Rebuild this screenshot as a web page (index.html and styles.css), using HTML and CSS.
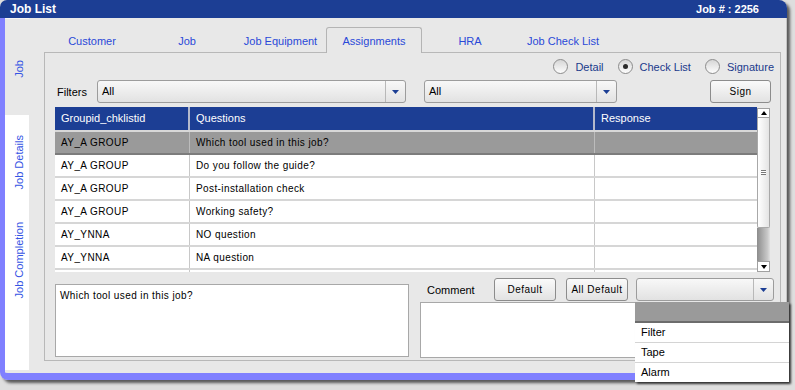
FILE: index.html
```html
<!DOCTYPE html>
<html>
<head>
<meta charset="utf-8">
<title>Job List</title>
<link rel="stylesheet" href="styles.css">
</head>
<body>
<div class="window">
  <div class="titlebar">
    <span class="title">Job List</span>
    <span class="jobno">Job # : 2256</span>
  </div>
  <div class="main">
    <div class="side">
      <div class="vtab vtab-active"><span class="vlabel">Job</span></div>
      <div class="vstrip">
        <div class="vtab vtab-details"><span class="vlabel">Job Details</span></div>
        <div class="vtab vtab-completion"><span class="vlabel">Job Completion</span></div>
      </div>
    </div>
    <div class="content">
      <div class="tabs">
        <div class="tab">Customer</div>
        <div class="tab">Job</div>
        <div class="tab">Job Equipment</div>
        <div class="tab tab-active">Assignments</div>
        <div class="tab">HRA</div>
        <div class="tab">Job Check List</div>
      </div>
      <div class="panel">
        <div class="radios">
          <label class="radio"><span class="radio-dot"></span>Detail</label>
          <label class="radio"><span class="radio-dot radio-checked"></span>Check List</label>
          <label class="radio"><span class="radio-dot"></span>Signature</label>
        </div>
        <div class="filters">
          <span class="filters-label">Filters</span>
          <div class="select select-wide">
            <span class="select-value">All</span>
            <span class="select-btn"><svg width="7" height="4" viewBox="0 0 7 4"><path d="M0 0H7L3.5 4Z" fill="#1c3e94"/></svg></span>
          </div>
          <div class="select select-mid">
            <span class="select-value">All</span>
            <span class="select-btn"><svg width="7" height="4" viewBox="0 0 7 4"><path d="M0 0H7L3.5 4Z" fill="#1c3e94"/></svg></span>
          </div>
          <button class="btn btn-sign">Sign</button>
        </div>
        <div class="grid-wrap">
          <div class="grid">
            <div class="grid-head">
              <div class="cell">Groupid_chklistid</div>
              <div class="cell">Questions</div>
              <div class="cell">Response</div>
            </div>
            <div class="row row-selected">
              <div class="cell">AY_A GROUP</div>
              <div class="cell">Which tool used in this job?</div>
              <div class="cell"></div>
            </div>
            <div class="row">
              <div class="cell">AY_A GROUP</div>
              <div class="cell">Do you follow the guide?</div>
              <div class="cell"></div>
            </div>
            <div class="row">
              <div class="cell">AY_A GROUP</div>
              <div class="cell">Post-installation check</div>
              <div class="cell"></div>
            </div>
            <div class="row">
              <div class="cell">AY_A GROUP</div>
              <div class="cell">Working safety?</div>
              <div class="cell"></div>
            </div>
            <div class="row">
              <div class="cell">AY_YNNA</div>
              <div class="cell">NO question</div>
              <div class="cell"></div>
            </div>
            <div class="row">
              <div class="cell">AY_YNNA</div>
              <div class="cell">NA question</div>
              <div class="cell"></div>
            </div>
            <div class="row">
              <div class="cell"></div>
              <div class="cell"></div>
              <div class="cell"></div>
            </div>
          </div>
          <div class="scrollbar">
            <div class="sb-btn"><svg width="6" height="4" viewBox="0 0 6 4"><path d="M0 4H6L3 0Z" fill="#000"/></svg></div>
            <div class="sb-thumb"><span class="grip"></span></div>
            <div class="sb-track"></div>
            <div class="sb-btn sb-down"><svg width="6" height="4" viewBox="0 0 6 4"><path d="M0 0H6L3 4Z" fill="#000"/></svg></div>
          </div>
        </div>
        <div class="bottom">
          <div class="question-box">Which tool used in this job?</div>
          <div class="comment">
            <div class="comment-bar">
              <span class="comment-label">Comment</span>
              <button class="btn btn-default">Default</button>
              <button class="btn btn-alldefault">All Default</button>
              <div class="select select-small">
                <span class="select-value"></span>
                <span class="select-btn"><svg width="7" height="4" viewBox="0 0 7 4"><path d="M0 0H7L3.5 4Z" fill="#1c3e94"/></svg></span>
                <ul class="dropdown">
                  <li class="dd-item dd-blank"></li>
                  <li class="dd-item">Filter</li>
                  <li class="dd-item">Tape</li>
                  <li class="dd-item dd-last">Alarm</li>
                </ul>
              </div>
            </div>
            <div class="comment-box"></div>
          </div>
        </div>
      </div>
    </div>
  </div>
</div>
</body>
</html>
```

FILE: styles.css
```css
* { box-sizing: border-box; }
html, body { margin: 0; padding: 0; }
body {
  width: 795px;
  height: 390px;
  overflow: hidden;
  background: #dedede;
  font-family: "Liberation Sans", Arial, sans-serif;
  font-size: 11px;
  color: #000;
}

.window {
  width: 787px;
  border-radius: 7px 8px 0 8px;
  box-shadow: 3px 3px 3px rgba(0, 0, 0, 0.6);
}

.titlebar {
  height: 18px;
  background: #1c3e94;
  color: #fff;
  font-weight: bold;
  display: flex;
  align-items: center;
  justify-content: space-between;
  padding: 0 28px 0 10px;
  border-radius: 7px 8px 0 0;
}
.title { font-size: 12px; }
.jobno { font-size: 11px; }

.main {
  display: flex;
  height: 362px;
  background: #e8e8e8;
  border-left: 5px solid #8080ff;
  border-right: 1px solid #c4c4c4;
  border-bottom: 7px solid #8080ff;
  border-bottom-left-radius: 8px;
}

/* left vertical tabs */
.side {
  width: 39px;
  display: flex;
  flex-direction: column;
}
.vtab {
  width: 24px;
  padding-left: 3px;
  display: flex;
  align-items: center;
  justify-content: center;
}
.vtab-active {
  height: 97px;
  padding-top: 4px;
  border-top: 1px solid #f6f6f6;
}
.vstrip {
  flex: 1;
  width: 24px;
  margin-bottom: 3px;
  background: #fff;
}
.vtab-details { height: 95px; }
.vtab-completion { height: 100px; }
.vlabel {
  writing-mode: vertical-rl;
  transform: rotate(180deg);
  color: #3454e4;
  font-size: 11px;
  white-space: nowrap;
}

/* content */
.content {
  flex: 1;
  display: flex;
  flex-direction: column;
}
.tabs {
  height: 34px;
  padding-left: 1px;
  display: grid;
  grid-template-columns: 94px 96px 91px 96px 96px 90px;
  align-items: end;
}
.tab {
  height: 25px;
  padding-top: 7px;
  line-height: 14px;
  text-align: center;
  color: #2a48d8;
  white-space: nowrap;
}
.tab-active {
  position: relative;
  z-index: 1;
  height: 26px;
  margin-bottom: -1px;
  padding-top: 6px;
  background: #e8e8e8;
  border: 1px solid #b4b4b4;
  border-bottom: 0;
  border-radius: 3px 3px 0 0;
}

.panel {
  height: 309px;
  margin-right: 5px;
  border: 1px solid #b8b8b8;
  padding: 0 6px 2px 10px;
  display: flex;
  flex-direction: column;
}

.radios {
  height: 27px;
  display: flex;
  align-items: center;
  justify-content: flex-end;
}
.radio {
  display: flex;
  align-items: center;
  gap: 7px;
  margin-left: 14px;
  color: #1a3a8c;
  font-size: 11px;
}
.radio-dot {
  width: 15px;
  height: 15px;
  border-radius: 50%;
  border: 1px solid #8c8c8c;
  background: linear-gradient(#d6d6d6, #fdfdfd);
  display: flex;
  align-items: center;
  justify-content: center;
}
.radio-checked::after {
  content: "";
  width: 5px;
  height: 5px;
  border-radius: 50%;
  background: #2a2a2a;
}

.filters {
  height: 23px;
  display: flex;
  align-items: center;
}
.filters-label {
  width: 42px;
  padding-left: 2px;
}
.select {
  position: relative;
  height: 23px;
  display: flex;
  border: 1px solid #9c9c9c;
  border-radius: 3px;
  background: linear-gradient(#f8f8f8, #e2e2e2);
}
.select-wide { width: 309px; }
.select-mid { width: 193px; margin-left: 18px; }
.select-small { width: 138px; margin-left: 8px; }
.select-value {
  flex: 1;
  padding-left: 4px;
  line-height: 21px;
  font-size: 11px;
}
.select-btn {
  width: 20px;
  border-left: 1px solid #b8b8b8;
  display: flex;
  align-items: center;
  justify-content: center;
}

.btn {
  height: 23px;
  padding: 0;
  border: 1px solid #8c8c8c;
  border-radius: 3px;
  background: linear-gradient(#fafafa, #e2e2e2);
  font-family: "Liberation Sans", Arial, sans-serif;
  font-size: 10px;
  letter-spacing: 0.5px;
  color: #000;
}
.btn-sign { width: 61px; margin-left: auto; margin-right: 3px; }
.btn-default { width: 62px; }
.btn-alldefault { width: 62px; margin-left: 10px; }

/* grid */
.grid-wrap {
  height: 165px;
  margin-top: 4px;
  display: flex;
}
.grid {
  width: 702px;
  overflow: hidden;
  background: #fff;
}
.grid-head {
  display: grid;
  grid-template-columns: 135px 405px 162px;
  height: 25px;
  background: #1c3e94;
  border-bottom: 2px solid #d8d8d8;
  color: #fff;
}
.grid-head .cell {
  padding-left: 6px;
  line-height: 23px;
  font-size: 11px;
  border-right: 2px solid #b4b9cc;
}
.grid-head .cell:last-child { border-right: 0; }
.row {
  display: grid;
  grid-template-columns: 135px 405px 162px;
  height: 23px;
  border-bottom: 2px solid #d6d6d6;
  background: #fff;
}
.row .cell {
  padding-left: 6px;
  line-height: 21px;
  font-size: 10px;
  letter-spacing: 0.4px;
  border-right: 1px solid #c8c8c8;
  white-space: nowrap;
}
.row .cell:last-child { border-right: 0; }
.row-selected {
  background: #9a9a9a;
  border-bottom-color: #7c7c7c;
}
.row-selected .cell { border-right-color: #bcbcbc; }

.scrollbar {
  width: 13px;
  padding-top: 1px;
  display: flex;
  flex-direction: column;
}
.sb-btn {
  height: 10px;
  background: #fff;
  border: 1px solid #a0a0a0;
  display: flex;
  align-items: center;
  justify-content: center;
}
.sb-down { height: 11px; }
.sb-thumb {
  height: 110px;
  background: linear-gradient(90deg, #ffffff, #e4e4e4);
  border: 1px solid #a8a8a8;
  border-top: 0;
  border-radius: 0 0 2px 2px;
  display: flex;
  align-items: center;
  justify-content: center;
}
.grip {
  width: 5px;
  height: 5px;
  border-top: 1px solid #777;
  border-bottom: 1px solid #777;
  background: linear-gradient(#fff 0 1px, #777 1px 2px, #fff 2px);
}
.sb-track {
  flex: 1;
  background: linear-gradient(90deg, #8c8c8c, #c8c8c8 80%, #e0e0e0);
}

/* bottom */
.bottom {
  height: 80px;
  margin-top: 6px;
  display: flex;
}
.question-box {
  width: 354px;
  height: 73px;
  margin-top: 6px;
  background: #fff;
  border: 1px solid #a8a8a8;
  padding: 5px 4px;
  line-height: 12px;
  font-size: 10px;
  letter-spacing: 0.4px;
}
.comment {
  width: 354px;
  margin-left: 11px;
  display: flex;
  flex-direction: column;
}
.comment-bar {
  height: 23px;
  display: flex;
  align-items: center;
}
.comment-label {
  width: 74px;
  padding-left: 7px;
  font-size: 11px;
}
.comment-box {
  height: 56px;
  margin-top: 1px;
  background: #fff;
  border: 1px solid #a8a8a8;
}

.dropdown {
  position: absolute;
  top: 23px;
  left: -2px;
  z-index: 5;
  width: 154px;
  margin: 0;
  padding: 0;
  list-style: none;
  background: #fff;
  box-shadow: 2px 2px 2px rgba(0, 0, 0, 0.6);
}
.dd-item {
  height: 20px;
  padding-left: 6px;
  line-height: 19px;
  font-size: 11px;
  border-bottom: 1px solid #d4d4d4;
}
.dd-blank {
  height: 21px;
  background: #9a9a9a;
  border-bottom: 2px solid #6c6c6c;
}
.dd-last { border-bottom: 0; height: 19px; }
```
